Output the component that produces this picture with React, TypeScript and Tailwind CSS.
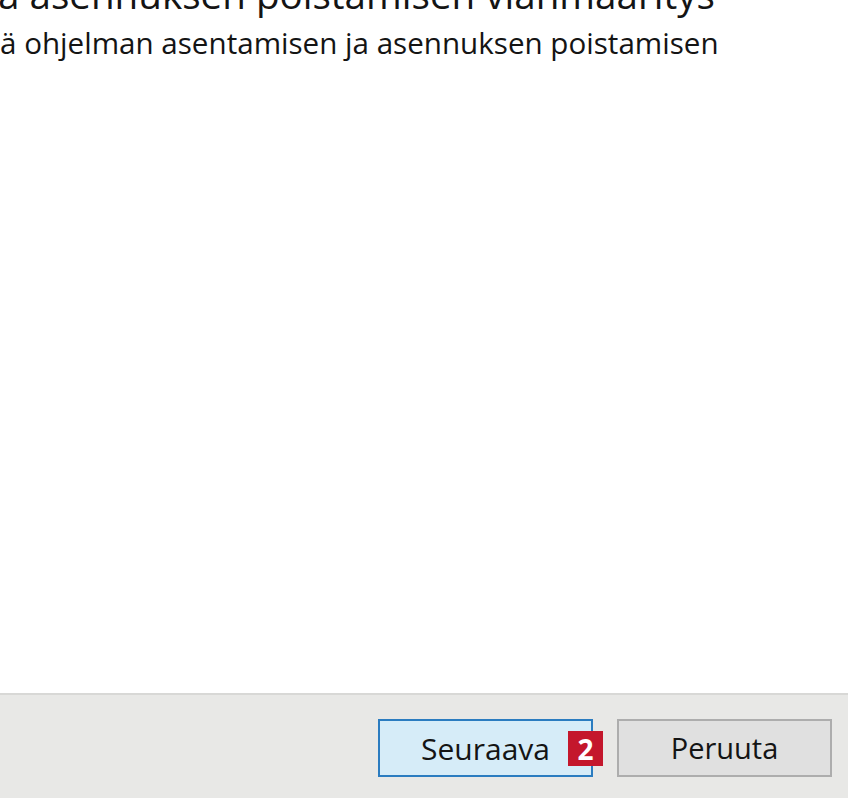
export default function App() {
  return (
    <div className="flex h-[798px] w-[848px] flex-col overflow-hidden bg-white font-['Open_Sans',sans-serif]">
      <div className="flex-1 overflow-hidden">
        <h1 className="-mt-[30px] -ml-[2px] whitespace-nowrap text-[38.6px] leading-[48px] text-[#141414]">
          a asennuksen poistamisen vianmääritys
        </h1>
        <p className="mt-[7px] whitespace-nowrap text-[29.6px] leading-[36px] text-[#141414]">
          ä ohjelman asentamisen ja asennuksen poistamisen
        </p>
      </div>
      <div className="flex h-[105px] items-start justify-end gap-[24px] border-t-2 border-[#d8d8d6] bg-[#e8e8e6] pt-[24px] pr-[16px]">
        <div className="relative">
          <button className="h-[58px] w-[215px] border-2 border-[#2b7cc0] bg-[#d6ecf8] text-[30px] text-[#141414]">
            Seuraava
          </button>
          <span className="absolute top-[12px] left-[190px] flex h-[35px] w-[35px] items-center justify-center bg-[#c4172c] text-[28px] font-bold leading-none text-white">
            2
          </span>
        </div>
        <button className="h-[58px] w-[215px] border-2 border-[#adadad] bg-[#e0e0e0] text-[29px] text-[#141414]">
          Peruuta
        </button>
      </div>
    </div>
  );
}
